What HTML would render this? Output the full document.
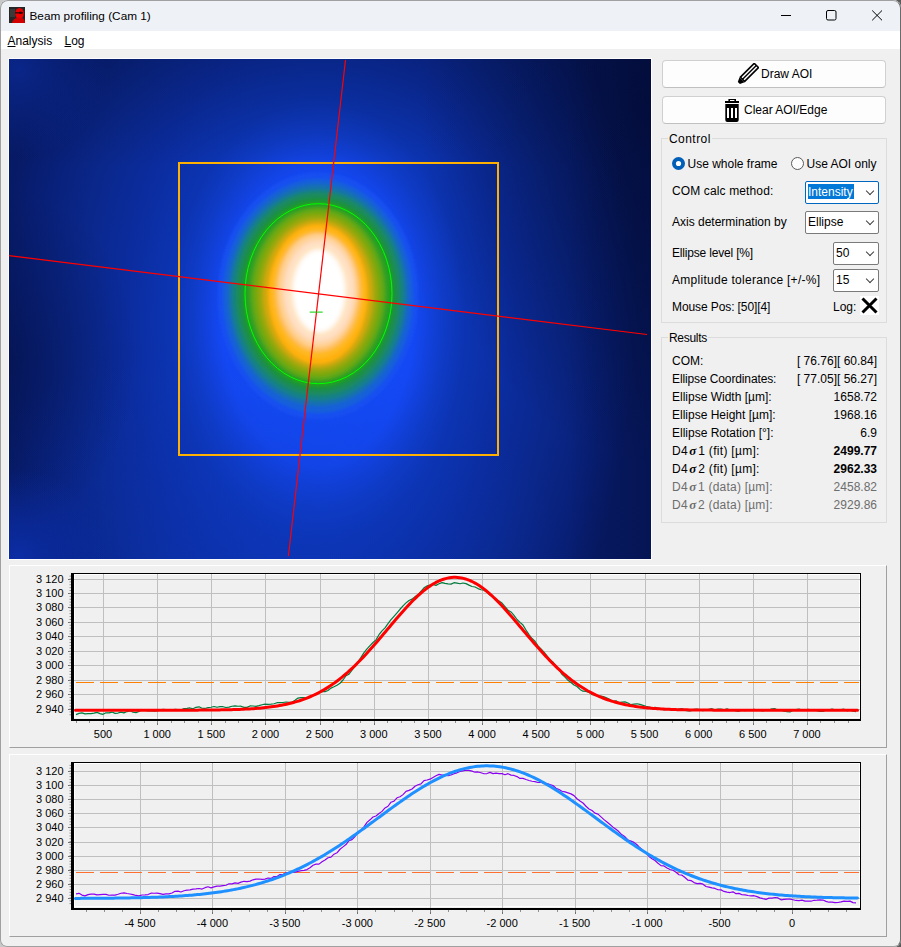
<!DOCTYPE html>
<html><head><meta charset="utf-8">
<style>
html,body{margin:0;padding:0;}
body{width:901px;height:947px;position:relative;overflow:hidden;background:linear-gradient(90deg,#c8c8c8 0,#c8c8c8 85%,#5a5a5a 93%);font-family:"Liberation Sans",sans-serif;color:#000;}
.win{position:absolute;left:0;top:0;width:901px;height:947px;background:#f0f0f0;border-radius:8px 8px 7px 7px;overflow:hidden;}
.wborder{position:absolute;left:0;top:0;width:901px;height:947px;border:1px solid #a0a0a0;border-right-color:#6a6a6a;border-radius:8px 8px 7px 7px;box-sizing:border-box;}
.abs{position:absolute;}
.t{position:absolute;white-space:pre;font-size:12px;line-height:14px;}
.title{position:absolute;left:0;top:0;width:100%;height:31px;background:#eef2f7;}
.menu{position:absolute;left:0;top:31px;width:100%;height:18px;background:#fff;}
.btn{position:absolute;left:662px;width:224px;height:28px;background:#fdfdfd;border:1px solid #d0d0d0;border-bottom-color:#c0c0c0;border-radius:4px;box-sizing:border-box;}
.grp{position:absolute;border:1px solid #dcdcdc;box-sizing:border-box;}
.combo{position:absolute;background:#fff;border:1px solid #7a7a7a;border-radius:2px;box-sizing:border-box;}
.chev{position:absolute;width:5px;height:5px;border-right:1px solid #404040;border-bottom:1px solid #404040;transform:rotate(45deg);}
.panel{position:absolute;left:9px;width:878px;height:183px;border-top:1px solid #fff;border-left:1px solid #fff;border-right:1px solid #a0a0a0;border-bottom:1px solid #a0a0a0;box-sizing:border-box;}
.ax{font-family:"Liberation Sans",sans-serif;font-size:11px;fill:#000;}
.sig{font-family:"Liberation Serif",serif;font-style:italic;font-weight:bold;font-size:13px;margin:0 1.6px 0 1.4px;}
</style></head><body>
<div class="win">
  <div class="title">
    <svg class="abs" style="left:9px;top:7px" width="16" height="16" viewBox="0 0 16 16">
      <rect width="16" height="16" fill="#262626"/>
      <rect x="1" y="2" width="5" height="8" fill="#3a3a3a"/>
      <ellipse cx="10.5" cy="6.5" rx="4.3" ry="5.6" fill="#ee0000"/>
      <path d="M3 16 Q4 11.5 8 11 L13 11 Q16 12 16 16 Z" fill="#d40000"/>
      <rect x="6" y="5" width="8" height="1.6" fill="#5a0000"/>
      <circle cx="11.5" cy="5.8" r="1.3" fill="#200000"/>
    </svg>
    <div class="t" style="left:29.5px;top:8.8px;font-size:11.8px;">Beam profiling (Cam 1)</div>
    <svg class="abs" style="left:780px;top:8px" width="110" height="16">
      <line x1="1" y1="7.5" x2="11" y2="7.5" stroke="#000" stroke-width="1"/>
      <rect x="46.5" y="2.5" width="9.5" height="9.5" rx="1.5" fill="none" stroke="#000" stroke-width="1"/>
      <path d="M92.2 2.5 L102 12.3 M102 2.5 L92.2 12.3" stroke="#000" stroke-width="1"/>
    </svg>
  </div>
  <div class="menu">
    <div class="t" style="left:7.5px;top:3.3px;"><u>A</u>nalysis</div>
    <div class="t" style="left:64.5px;top:3.3px;"><u>L</u>og</div>
  </div>

  <!-- beam image: svg origin at (8,58) -->
  <svg class="abs" style="left:8px;top:58px" width="644" height="502">
    <defs>
      <filter id="bl2" x="-20%" y="-20%" width="140%" height="140%"><feGaussianBlur stdDeviation="1.6"/></filter>
      <radialGradient id="halo" gradientUnits="userSpaceOnUse" cx="310" cy="262" r="320" gradientTransform="translate(310 262) scale(1 1.5) translate(-310 -262)">
        <stop offset="0" stop-color="#1450ff"/>
        <stop offset="0.30" stop-color="#1448f4"/>
        <stop offset="0.34" stop-color="#1242e0"/>
        <stop offset="0.39" stop-color="#0f3cc8"/>
        <stop offset="0.46" stop-color="#0c34b2"/>
        <stop offset="0.60" stop-color="#0b2c9e"/>
        <stop offset="0.75" stop-color="#0a278a"/>
        <stop offset="0.90" stop-color="#081f76"/>
        <stop offset="1" stop-color="#071a66"/>
      </radialGradient>
      <radialGradient id="bglow" gradientUnits="userSpaceOnUse" cx="230" cy="540" r="260" gradientTransform="translate(230 540) scale(1.3 1) translate(-230 -540)">
        <stop offset="0" stop-color="#0d38c0" stop-opacity="0.55"/>
        <stop offset="1" stop-color="#0d38c0" stop-opacity="0"/>
      </radialGradient>
      <linearGradient id="topdark" gradientUnits="userSpaceOnUse" x1="0" y1="0" x2="0" y2="110">
        <stop offset="0" stop-color="#020a30" stop-opacity="0.25"/>
        <stop offset="1" stop-color="#020a30" stop-opacity="0"/>
      </linearGradient>
      <radialGradient id="tr" gradientUnits="userSpaceOnUse" cx="643" cy="60" r="230" gradientTransform="translate(643 60) scale(1 1.5) translate(-643 -60)">
        <stop offset="0" stop-color="#020a30" stop-opacity="0.6"/>
        <stop offset="1" stop-color="#020a30" stop-opacity="0"/>
      </radialGradient>
      <linearGradient id="redge" gradientUnits="userSpaceOnUse" x1="560" y1="0" x2="643" y2="0">
        <stop offset="0" stop-color="#020a30" stop-opacity="0"/>
        <stop offset="1" stop-color="#020a30" stop-opacity="0.35"/>
      </linearGradient>
      <radialGradient id="lm" gradientUnits="userSpaceOnUse" cx="1" cy="300" r="130" gradientTransform="translate(1 300) scale(1 1.3) translate(-1 -300)">
        <stop offset="0" stop-color="#020a30" stop-opacity="0.35"/>
        <stop offset="1" stop-color="#020a30" stop-opacity="0"/>
      </radialGradient>
      <radialGradient id="blc" gradientUnits="userSpaceOnUse" cx="10" cy="500" r="90">
        <stop offset="0" stop-color="#0c30b0" stop-opacity="0.8"/>
        <stop offset="1" stop-color="#0c30b0" stop-opacity="0"/>
      </radialGradient>
      <radialGradient id="tlc" gradientUnits="userSpaceOnUse" cx="10" cy="10" r="90">
        <stop offset="0" stop-color="#0c30a8" stop-opacity="0.6"/>
        <stop offset="1" stop-color="#0c30a8" stop-opacity="0"/>
      </radialGradient>
      <clipPath id="imgclip"><rect x="1" y="1" width="642" height="500"/></clipPath>
    </defs>
    <rect x="0" y="0" width="644" height="502" fill="#fcfcfc"/>
    <g clip-path="url(#imgclip)">
    <rect x="1" y="1" width="642" height="500" fill="url(#halo)"/>
    <rect x="1" y="1" width="642" height="500" fill="url(#bglow)"/>
        <rect x="1" y="1" width="642" height="500" fill="url(#topdark)"/>
    <rect x="1" y="1" width="642" height="500" fill="url(#tr)"/>
    <rect x="1" y="1" width="642" height="500" fill="url(#redge)"/>
    <rect x="1" y="1" width="642" height="500" fill="url(#lm)"/>
    <rect x="1" y="1" width="642" height="500" fill="url(#blc)"/>
    <rect x="1" y="1" width="642" height="500" fill="url(#tlc)"/>
<g filter="url(#bl2)">
<ellipse cx="310" cy="238" rx="100" ry="123" fill="#1450f0"/>
<ellipse cx="310" cy="238" rx="95" ry="117" fill="#1460d8"/>
<ellipse cx="310" cy="237" rx="90" ry="111" fill="#1870b0"/>
<ellipse cx="310" cy="237" rx="87" ry="106" fill="#188088"/>
<ellipse cx="310" cy="236" rx="83" ry="102" fill="#1a8a60"/>
<ellipse cx="310" cy="236" rx="79" ry="97" fill="#1a9040"/>
<ellipse cx="310" cy="236" rx="75" ry="93" fill="#20a020"/>
<ellipse cx="310" cy="236" rx="71" ry="89" fill="#30a020"/>
<ellipse cx="310" cy="236" rx="67" ry="86" fill="#60a818"/>
<ellipse cx="310" cy="236" rx="63" ry="82" fill="#80a810"/>
<ellipse cx="310" cy="236" rx="59" ry="78" fill="#a0a810"/>
<ellipse cx="310" cy="236" rx="55" ry="74" fill="#d0a810"/>
<ellipse cx="310" cy="236" rx="50" ry="70" fill="#ffb010"/>
<ellipse cx="310" cy="235" rx="47" ry="65" fill="#ffb820"/>
<ellipse cx="310" cy="234" rx="43" ry="60" fill="#ffc060"/>
<ellipse cx="310" cy="233" rx="40" ry="57" fill="#ffd090"/>
<ellipse cx="311" cy="233" rx="37" ry="53" fill="#ffd8b0"/>
<ellipse cx="311" cy="233" rx="34" ry="49" fill="#ffe0c8"/>
<ellipse cx="311" cy="233" rx="31" ry="46" fill="#ffe4c0"/>
<ellipse cx="311" cy="233" rx="28" ry="43" fill="#fff0e0"/>
<ellipse cx="311" cy="233" rx="26" ry="41" fill="#fff8f0"/>
<ellipse cx="311" cy="233" rx="24" ry="39" fill="#ffffff"/>
</g>
    </g>
    <!-- AOI -->
    <rect x="171" y="105" width="319" height="292" fill="none" stroke="#ffb000" stroke-width="2"/>
    <!-- ellipse -->
    <ellipse cx="310.5" cy="235.7" rx="73.5" ry="90" fill="none" stroke="#00ff00" stroke-width="1"/>
    <!-- cross -->
    <line x1="337.5" y1="2" x2="280.4" y2="498" stroke="#ff0000" stroke-width="1.2"/>
    <line x1="1" y1="197.6" x2="639" y2="276.5" stroke="#ff0000" stroke-width="1.2"/>
    <line x1="301.7" y1="254.1" x2="314.7" y2="254.1" stroke="#00d000" stroke-width="1"/>
  </svg>

  <!-- right panel -->
  <div class="btn" style="top:60px;">
    <svg class="abs" style="left:74px;top:2px" width="22" height="22" viewBox="0 0 22 22">
      <g transform="translate(1.5 20.3) rotate(-45)">
        <rect x="5" y="-3.8" width="21" height="7.6" fill="#000"/>
        <rect x="6.5" y="-2.2" width="18" height="1.5" fill="#fff"/>
        <rect x="6.5" y="0.7" width="18" height="1.5" fill="#fff"/>
        <path d="M0.5 -1.5 L5 -3.6 L5 3.6 L0.5 1.5 Z" fill="#000"/>
      </g>
    </svg>
    <div class="t" style="left:98px;top:6px;">Draw AOI</div>
  </div>
  <div class="btn" style="top:96px;">
    <svg class="abs" style="left:62px;top:2px" width="15" height="24" viewBox="0 0 15 24">
      <rect x="3.4" y="0" width="7.6" height="3" fill="#000"/>
      <rect x="5" y="1" width="4.4" height="1.1" fill="#fff"/>
      <rect x="0" y="2" width="14" height="2" fill="#000"/>
      <path d="M0.3 5 L13.7 5 L13.7 21 Q13.7 23 11.7 23 L2.3 23 Q0.3 23 0.3 21 Z" fill="#000"/>
      <rect x="2" y="9" width="2" height="10" fill="#fff"/>
      <rect x="6" y="9" width="2" height="10" fill="#fff"/>
      <rect x="10" y="9" width="2" height="10" fill="#fff"/>
    </svg>
    <div class="t" style="left:81px;top:6px;">Clear AOI/Edge</div>
  </div>

  <!-- Control group -->
  <div class="grp" style="left:661px;top:138px;width:226px;height:185px;"></div>
  <div class="t" style="left:668px;top:132px;background:#f0f0f0;padding:0 1px;letter-spacing:0.45px;">Control</div>
  <svg class="abs" style="left:672px;top:157px" width="13" height="13">
    <circle cx="6.5" cy="6.5" r="6.5" fill="#005fb8"/>
    <circle cx="6.5" cy="6.5" r="2.6" fill="#fff"/>
  </svg>
  <div class="t" style="left:687.5px;top:156.7px;">Use whole frame</div>
  <svg class="abs" style="left:791px;top:157px" width="13" height="13">
    <circle cx="6.5" cy="6.5" r="6" fill="#fdfdfd" stroke="#5a5a5a" stroke-width="1"/>
  </svg>
  <div class="t" style="left:806.5px;top:156.7px;">Use AOI only</div>

  <div class="t" style="left:672px;top:184px;letter-spacing:0.13px;">COM calc method:</div>
  <div class="combo" style="left:805px;top:181px;width:74px;height:23px;border-color:#0067c0;">
    <div class="abs" style="left:2px;top:2px;width:46px;height:15px;background:#0078d7;"></div>
    <div class="t" style="left:2px;top:3px;color:#fff;">Intensity</div>
    <div class="chev" style="left:61px;top:6px;"></div>
  </div>
  <div class="t" style="left:672px;top:214.7px;">Axis determination by</div>
  <div class="combo" style="left:805px;top:211px;width:74px;height:23px;">
    <div class="t" style="left:2px;top:3px;">Ellipse</div>
    <div class="chev" style="left:61px;top:6px;"></div>
  </div>
  <div class="t" style="left:672px;top:245.7px;letter-spacing:-0.18px;">Ellipse level [%]</div>
  <div class="combo" style="left:833px;top:242px;width:46px;height:23px;">
    <div class="t" style="left:2px;top:3px;">50</div>
    <div class="chev" style="left:33px;top:6px;"></div>
  </div>
  <div class="t" style="left:672px;top:272.5px;letter-spacing:0.28px;">Amplitude tolerance [+/-%]</div>
  <div class="combo" style="left:833px;top:269px;width:46px;height:23px;">
    <div class="t" style="left:2px;top:3px;">15</div>
    <div class="chev" style="left:33px;top:6px;"></div>
  </div>
  <div class="t" style="left:672px;top:299.8px;letter-spacing:-0.1px;">Mouse Pos: [50][4]</div>
  <div class="t" style="left:833px;top:299.8px;">Log:</div>
  <svg class="abs" style="left:859.5px;top:296.3px" width="19" height="19">
    <rect width="19" height="19" fill="#fff"/>
    <path d="M2.5 2.5 L16.5 16.5 M16.5 2.5 L2.5 16.5" stroke="#000" stroke-width="3"/>
  </svg>

  <!-- Results group -->
  <div class="grp" style="left:661px;top:337px;width:226px;height:186px;"></div>
  <div class="t" style="left:668px;top:330.7px;background:#f0f0f0;padding:0 1px;letter-spacing:-0.3px;">Results</div>
  <div class="t" style="left:672px;top:354.2px;">COM:</div>
  <div class="t" style="left:672px;top:372.2px;letter-spacing:-0.12px;">Ellipse Coordinates:</div>
  <div class="t" style="left:672px;top:390.2px;">Ellipse Width [µm]:</div>
  <div class="t" style="left:672px;top:408.2px;">Ellipse Height [µm]:</div>
  <div class="t" style="left:672px;top:426.2px;">Ellipse Rotation [°]:</div>
  <div class="t" style="left:672px;top:444.2px;letter-spacing:0.3px;">D4<span class="sig">σ</span>1 (fit) [µm]:</div>
  <div class="t" style="left:672px;top:462.2px;letter-spacing:0.3px;">D4<span class="sig">σ</span>2 (fit) [µm]:</div>
  <div class="t" style="left:672px;top:480.2px;color:#6d6d6d;letter-spacing:0.22px;">D4<span class="sig">σ</span>1 (data) [µm]:</div>
  <div class="t" style="left:672px;top:498.2px;color:#6d6d6d;letter-spacing:0.22px;">D4<span class="sig">σ</span>2 (data) [µm]:</div>
  <div class="t" style="right:24px;top:354.2px;">[ 76.76][ 60.84]</div>
  <div class="t" style="right:24px;top:372.2px;">[ 77.05][ 56.27]</div>
  <div class="t" style="right:24px;top:390.2px;">1658.72</div>
  <div class="t" style="right:24px;top:408.2px;">1968.16</div>
  <div class="t" style="right:24px;top:426.2px;">6.9</div>
  <div class="t" style="right:24px;top:444.2px;font-weight:bold;">2499.77</div>
  <div class="t" style="right:24px;top:462.2px;font-weight:bold;">2962.33</div>
  <div class="t" style="right:24px;top:480.2px;color:#6d6d6d;">2458.82</div>
  <div class="t" style="right:24px;top:498.2px;color:#6d6d6d;">2929.86</div>

  <!-- chart panels -->
  <div class="panel" style="top:565px;"></div>
  <div class="panel" style="top:754px;"></div>
</div>
<svg class="abs" style="left:0;top:0" width="901" height="947">
<rect x="74.5" y="574.5" width="785" height="143" fill="none" stroke="#ffffff" stroke-width="1"/>
<line x1="103.5" y1="574" x2="103.5" y2="719" stroke="#bfbfbf" stroke-width="1"/>
<line x1="103.5" y1="721" x2="103.5" y2="725" stroke="#707070" stroke-width="1"/>
<line x1="157.5" y1="574" x2="157.5" y2="719" stroke="#bfbfbf" stroke-width="1"/>
<line x1="157.5" y1="721" x2="157.5" y2="725" stroke="#707070" stroke-width="1"/>
<line x1="211.5" y1="574" x2="211.5" y2="719" stroke="#bfbfbf" stroke-width="1"/>
<line x1="211.5" y1="721" x2="211.5" y2="725" stroke="#707070" stroke-width="1"/>
<line x1="265.5" y1="574" x2="265.5" y2="719" stroke="#bfbfbf" stroke-width="1"/>
<line x1="265.5" y1="721" x2="265.5" y2="725" stroke="#707070" stroke-width="1"/>
<line x1="320.5" y1="574" x2="320.5" y2="719" stroke="#bfbfbf" stroke-width="1"/>
<line x1="320.5" y1="721" x2="320.5" y2="725" stroke="#707070" stroke-width="1"/>
<line x1="374.5" y1="574" x2="374.5" y2="719" stroke="#bfbfbf" stroke-width="1"/>
<line x1="374.5" y1="721" x2="374.5" y2="725" stroke="#707070" stroke-width="1"/>
<line x1="428.5" y1="574" x2="428.5" y2="719" stroke="#bfbfbf" stroke-width="1"/>
<line x1="428.5" y1="721" x2="428.5" y2="725" stroke="#707070" stroke-width="1"/>
<line x1="482.5" y1="574" x2="482.5" y2="719" stroke="#bfbfbf" stroke-width="1"/>
<line x1="482.5" y1="721" x2="482.5" y2="725" stroke="#707070" stroke-width="1"/>
<line x1="536.5" y1="574" x2="536.5" y2="719" stroke="#bfbfbf" stroke-width="1"/>
<line x1="536.5" y1="721" x2="536.5" y2="725" stroke="#707070" stroke-width="1"/>
<line x1="590.5" y1="574" x2="590.5" y2="719" stroke="#bfbfbf" stroke-width="1"/>
<line x1="590.5" y1="721" x2="590.5" y2="725" stroke="#707070" stroke-width="1"/>
<line x1="645.5" y1="574" x2="645.5" y2="719" stroke="#bfbfbf" stroke-width="1"/>
<line x1="645.5" y1="721" x2="645.5" y2="725" stroke="#707070" stroke-width="1"/>
<line x1="699.5" y1="574" x2="699.5" y2="719" stroke="#bfbfbf" stroke-width="1"/>
<line x1="699.5" y1="721" x2="699.5" y2="725" stroke="#707070" stroke-width="1"/>
<line x1="753.5" y1="574" x2="753.5" y2="719" stroke="#bfbfbf" stroke-width="1"/>
<line x1="753.5" y1="721" x2="753.5" y2="725" stroke="#707070" stroke-width="1"/>
<line x1="807.5" y1="574" x2="807.5" y2="719" stroke="#bfbfbf" stroke-width="1"/>
<line x1="807.5" y1="721" x2="807.5" y2="725" stroke="#707070" stroke-width="1"/>
<line x1="74" y1="709.5" x2="860" y2="709.5" stroke="#bfbfbf" stroke-width="1"/>
<line x1="68" y1="709.5" x2="71" y2="709.5" stroke="#707070" stroke-width="1"/>
<text x="63.5" y="712.6" text-anchor="end" class="ax">2 940</text>
<line x1="74" y1="694.5" x2="860" y2="694.5" stroke="#bfbfbf" stroke-width="1"/>
<line x1="68" y1="694.5" x2="71" y2="694.5" stroke="#707070" stroke-width="1"/>
<text x="63.5" y="697.6" text-anchor="end" class="ax">2 960</text>
<line x1="74" y1="680.5" x2="860" y2="680.5" stroke="#bfbfbf" stroke-width="1"/>
<line x1="68" y1="680.5" x2="71" y2="680.5" stroke="#707070" stroke-width="1"/>
<text x="63.5" y="683.6" text-anchor="end" class="ax">2 980</text>
<line x1="74" y1="665.5" x2="860" y2="665.5" stroke="#bfbfbf" stroke-width="1"/>
<line x1="68" y1="665.5" x2="71" y2="665.5" stroke="#707070" stroke-width="1"/>
<text x="63.5" y="668.6" text-anchor="end" class="ax">3 000</text>
<line x1="74" y1="651.5" x2="860" y2="651.5" stroke="#bfbfbf" stroke-width="1"/>
<line x1="68" y1="651.5" x2="71" y2="651.5" stroke="#707070" stroke-width="1"/>
<text x="63.5" y="654.6" text-anchor="end" class="ax">3 020</text>
<line x1="74" y1="636.5" x2="860" y2="636.5" stroke="#bfbfbf" stroke-width="1"/>
<line x1="68" y1="636.5" x2="71" y2="636.5" stroke="#707070" stroke-width="1"/>
<text x="63.5" y="639.6" text-anchor="end" class="ax">3 040</text>
<line x1="74" y1="622.5" x2="860" y2="622.5" stroke="#bfbfbf" stroke-width="1"/>
<line x1="68" y1="622.5" x2="71" y2="622.5" stroke="#707070" stroke-width="1"/>
<text x="63.5" y="625.6" text-anchor="end" class="ax">3 060</text>
<line x1="74" y1="607.5" x2="860" y2="607.5" stroke="#bfbfbf" stroke-width="1"/>
<line x1="68" y1="607.5" x2="71" y2="607.5" stroke="#707070" stroke-width="1"/>
<text x="63.5" y="610.6" text-anchor="end" class="ax">3 080</text>
<line x1="74" y1="593.5" x2="860" y2="593.5" stroke="#bfbfbf" stroke-width="1"/>
<line x1="68" y1="593.5" x2="71" y2="593.5" stroke="#707070" stroke-width="1"/>
<text x="63.5" y="596.6" text-anchor="end" class="ax">3 100</text>
<line x1="74" y1="579.5" x2="860" y2="579.5" stroke="#bfbfbf" stroke-width="1"/>
<line x1="68" y1="579.5" x2="71" y2="579.5" stroke="#707070" stroke-width="1"/>
<text x="63.5" y="582.6" text-anchor="end" class="ax">3 120</text>
<line x1="69.5" y1="714.78" x2="71" y2="714.78" stroke="#909090" stroke-width="1"/>
<line x1="69.5" y1="711.89" x2="71" y2="711.89" stroke="#909090" stroke-width="1"/>
<line x1="69.5" y1="709" x2="71" y2="709" stroke="#909090" stroke-width="1"/>
<line x1="69.5" y1="706.11" x2="71" y2="706.11" stroke="#909090" stroke-width="1"/>
<line x1="69.5" y1="703.22" x2="71" y2="703.22" stroke="#909090" stroke-width="1"/>
<line x1="69.5" y1="700.33" x2="71" y2="700.33" stroke="#909090" stroke-width="1"/>
<line x1="69.5" y1="697.44" x2="71" y2="697.44" stroke="#909090" stroke-width="1"/>
<line x1="69.5" y1="694.56" x2="71" y2="694.56" stroke="#909090" stroke-width="1"/>
<line x1="69.5" y1="691.67" x2="71" y2="691.67" stroke="#909090" stroke-width="1"/>
<line x1="69.5" y1="688.78" x2="71" y2="688.78" stroke="#909090" stroke-width="1"/>
<line x1="69.5" y1="685.89" x2="71" y2="685.89" stroke="#909090" stroke-width="1"/>
<line x1="69.5" y1="683" x2="71" y2="683" stroke="#909090" stroke-width="1"/>
<line x1="69.5" y1="680.11" x2="71" y2="680.11" stroke="#909090" stroke-width="1"/>
<line x1="69.5" y1="677.22" x2="71" y2="677.22" stroke="#909090" stroke-width="1"/>
<line x1="69.5" y1="674.33" x2="71" y2="674.33" stroke="#909090" stroke-width="1"/>
<line x1="69.5" y1="671.44" x2="71" y2="671.44" stroke="#909090" stroke-width="1"/>
<line x1="69.5" y1="668.56" x2="71" y2="668.56" stroke="#909090" stroke-width="1"/>
<line x1="69.5" y1="665.67" x2="71" y2="665.67" stroke="#909090" stroke-width="1"/>
<line x1="69.5" y1="662.78" x2="71" y2="662.78" stroke="#909090" stroke-width="1"/>
<line x1="69.5" y1="659.89" x2="71" y2="659.89" stroke="#909090" stroke-width="1"/>
<line x1="69.5" y1="657" x2="71" y2="657" stroke="#909090" stroke-width="1"/>
<line x1="69.5" y1="654.11" x2="71" y2="654.11" stroke="#909090" stroke-width="1"/>
<line x1="69.5" y1="651.22" x2="71" y2="651.22" stroke="#909090" stroke-width="1"/>
<line x1="69.5" y1="648.33" x2="71" y2="648.33" stroke="#909090" stroke-width="1"/>
<line x1="69.5" y1="645.44" x2="71" y2="645.44" stroke="#909090" stroke-width="1"/>
<line x1="69.5" y1="642.56" x2="71" y2="642.56" stroke="#909090" stroke-width="1"/>
<line x1="69.5" y1="639.67" x2="71" y2="639.67" stroke="#909090" stroke-width="1"/>
<line x1="69.5" y1="636.78" x2="71" y2="636.78" stroke="#909090" stroke-width="1"/>
<line x1="69.5" y1="633.89" x2="71" y2="633.89" stroke="#909090" stroke-width="1"/>
<line x1="69.5" y1="631" x2="71" y2="631" stroke="#909090" stroke-width="1"/>
<line x1="69.5" y1="628.11" x2="71" y2="628.11" stroke="#909090" stroke-width="1"/>
<line x1="69.5" y1="625.22" x2="71" y2="625.22" stroke="#909090" stroke-width="1"/>
<line x1="69.5" y1="622.33" x2="71" y2="622.33" stroke="#909090" stroke-width="1"/>
<line x1="69.5" y1="619.44" x2="71" y2="619.44" stroke="#909090" stroke-width="1"/>
<line x1="69.5" y1="616.56" x2="71" y2="616.56" stroke="#909090" stroke-width="1"/>
<line x1="69.5" y1="613.67" x2="71" y2="613.67" stroke="#909090" stroke-width="1"/>
<line x1="69.5" y1="610.78" x2="71" y2="610.78" stroke="#909090" stroke-width="1"/>
<line x1="69.5" y1="607.89" x2="71" y2="607.89" stroke="#909090" stroke-width="1"/>
<line x1="69.5" y1="605" x2="71" y2="605" stroke="#909090" stroke-width="1"/>
<line x1="69.5" y1="602.11" x2="71" y2="602.11" stroke="#909090" stroke-width="1"/>
<line x1="69.5" y1="599.22" x2="71" y2="599.22" stroke="#909090" stroke-width="1"/>
<line x1="69.5" y1="596.33" x2="71" y2="596.33" stroke="#909090" stroke-width="1"/>
<line x1="69.5" y1="593.44" x2="71" y2="593.44" stroke="#909090" stroke-width="1"/>
<line x1="69.5" y1="590.56" x2="71" y2="590.56" stroke="#909090" stroke-width="1"/>
<line x1="69.5" y1="587.67" x2="71" y2="587.67" stroke="#909090" stroke-width="1"/>
<line x1="69.5" y1="584.78" x2="71" y2="584.78" stroke="#909090" stroke-width="1"/>
<line x1="69.5" y1="581.89" x2="71" y2="581.89" stroke="#909090" stroke-width="1"/>
<line x1="69.5" y1="579" x2="71" y2="579" stroke="#909090" stroke-width="1"/>
<line x1="69.5" y1="576.11" x2="71" y2="576.11" stroke="#909090" stroke-width="1"/>
<line x1="76.5" y1="721" x2="76.5" y2="723" stroke="#909090" stroke-width="1"/>
<line x1="89.5" y1="721" x2="89.5" y2="723" stroke="#909090" stroke-width="1"/>
<line x1="103.5" y1="721" x2="103.5" y2="723" stroke="#909090" stroke-width="1"/>
<line x1="117.5" y1="721" x2="117.5" y2="723" stroke="#909090" stroke-width="1"/>
<line x1="130.5" y1="721" x2="130.5" y2="723" stroke="#909090" stroke-width="1"/>
<line x1="144.5" y1="721" x2="144.5" y2="723" stroke="#909090" stroke-width="1"/>
<line x1="157.5" y1="721" x2="157.5" y2="723" stroke="#909090" stroke-width="1"/>
<line x1="171.5" y1="721" x2="171.5" y2="723" stroke="#909090" stroke-width="1"/>
<line x1="184.5" y1="721" x2="184.5" y2="723" stroke="#909090" stroke-width="1"/>
<line x1="198.5" y1="721" x2="198.5" y2="723" stroke="#909090" stroke-width="1"/>
<line x1="211.5" y1="721" x2="211.5" y2="723" stroke="#909090" stroke-width="1"/>
<line x1="225.5" y1="721" x2="225.5" y2="723" stroke="#909090" stroke-width="1"/>
<line x1="238.5" y1="721" x2="238.5" y2="723" stroke="#909090" stroke-width="1"/>
<line x1="252.5" y1="721" x2="252.5" y2="723" stroke="#909090" stroke-width="1"/>
<line x1="265.5" y1="721" x2="265.5" y2="723" stroke="#909090" stroke-width="1"/>
<line x1="279.5" y1="721" x2="279.5" y2="723" stroke="#909090" stroke-width="1"/>
<line x1="293.5" y1="721" x2="293.5" y2="723" stroke="#909090" stroke-width="1"/>
<line x1="306.5" y1="721" x2="306.5" y2="723" stroke="#909090" stroke-width="1"/>
<line x1="320.5" y1="721" x2="320.5" y2="723" stroke="#909090" stroke-width="1"/>
<line x1="333.5" y1="721" x2="333.5" y2="723" stroke="#909090" stroke-width="1"/>
<line x1="347.5" y1="721" x2="347.5" y2="723" stroke="#909090" stroke-width="1"/>
<line x1="360.5" y1="721" x2="360.5" y2="723" stroke="#909090" stroke-width="1"/>
<line x1="374.5" y1="721" x2="374.5" y2="723" stroke="#909090" stroke-width="1"/>
<line x1="387.5" y1="721" x2="387.5" y2="723" stroke="#909090" stroke-width="1"/>
<line x1="401.5" y1="721" x2="401.5" y2="723" stroke="#909090" stroke-width="1"/>
<line x1="414.5" y1="721" x2="414.5" y2="723" stroke="#909090" stroke-width="1"/>
<line x1="428.5" y1="721" x2="428.5" y2="723" stroke="#909090" stroke-width="1"/>
<line x1="441.5" y1="721" x2="441.5" y2="723" stroke="#909090" stroke-width="1"/>
<line x1="455.5" y1="721" x2="455.5" y2="723" stroke="#909090" stroke-width="1"/>
<line x1="469.5" y1="721" x2="469.5" y2="723" stroke="#909090" stroke-width="1"/>
<line x1="482.5" y1="721" x2="482.5" y2="723" stroke="#909090" stroke-width="1"/>
<line x1="496.5" y1="721" x2="496.5" y2="723" stroke="#909090" stroke-width="1"/>
<line x1="509.5" y1="721" x2="509.5" y2="723" stroke="#909090" stroke-width="1"/>
<line x1="523.5" y1="721" x2="523.5" y2="723" stroke="#909090" stroke-width="1"/>
<line x1="536.5" y1="721" x2="536.5" y2="723" stroke="#909090" stroke-width="1"/>
<line x1="550.5" y1="721" x2="550.5" y2="723" stroke="#909090" stroke-width="1"/>
<line x1="563.5" y1="721" x2="563.5" y2="723" stroke="#909090" stroke-width="1"/>
<line x1="577.5" y1="721" x2="577.5" y2="723" stroke="#909090" stroke-width="1"/>
<line x1="590.5" y1="721" x2="590.5" y2="723" stroke="#909090" stroke-width="1"/>
<line x1="604.5" y1="721" x2="604.5" y2="723" stroke="#909090" stroke-width="1"/>
<line x1="617.5" y1="721" x2="617.5" y2="723" stroke="#909090" stroke-width="1"/>
<line x1="631.5" y1="721" x2="631.5" y2="723" stroke="#909090" stroke-width="1"/>
<line x1="645.5" y1="721" x2="645.5" y2="723" stroke="#909090" stroke-width="1"/>
<line x1="658.5" y1="721" x2="658.5" y2="723" stroke="#909090" stroke-width="1"/>
<line x1="672.5" y1="721" x2="672.5" y2="723" stroke="#909090" stroke-width="1"/>
<line x1="685.5" y1="721" x2="685.5" y2="723" stroke="#909090" stroke-width="1"/>
<line x1="699.5" y1="721" x2="699.5" y2="723" stroke="#909090" stroke-width="1"/>
<line x1="712.5" y1="721" x2="712.5" y2="723" stroke="#909090" stroke-width="1"/>
<line x1="726.5" y1="721" x2="726.5" y2="723" stroke="#909090" stroke-width="1"/>
<line x1="739.5" y1="721" x2="739.5" y2="723" stroke="#909090" stroke-width="1"/>
<line x1="753.5" y1="721" x2="753.5" y2="723" stroke="#909090" stroke-width="1"/>
<line x1="766.5" y1="721" x2="766.5" y2="723" stroke="#909090" stroke-width="1"/>
<line x1="780.5" y1="721" x2="780.5" y2="723" stroke="#909090" stroke-width="1"/>
<line x1="793.5" y1="721" x2="793.5" y2="723" stroke="#909090" stroke-width="1"/>
<line x1="807.5" y1="721" x2="807.5" y2="723" stroke="#909090" stroke-width="1"/>
<line x1="820.5" y1="721" x2="820.5" y2="723" stroke="#909090" stroke-width="1"/>
<line x1="834.5" y1="721" x2="834.5" y2="723" stroke="#909090" stroke-width="1"/>
<line x1="848.5" y1="721" x2="848.5" y2="723" stroke="#909090" stroke-width="1"/>
<text x="103" y="737.5" text-anchor="middle" class="ax">500</text>
<text x="157.15" y="737.5" text-anchor="middle" class="ax">1 000</text>
<text x="211.3" y="737.5" text-anchor="middle" class="ax">1 500</text>
<text x="265.45" y="737.5" text-anchor="middle" class="ax">2 000</text>
<text x="319.6" y="737.5" text-anchor="middle" class="ax">2 500</text>
<text x="373.75" y="737.5" text-anchor="middle" class="ax">3 000</text>
<text x="427.9" y="737.5" text-anchor="middle" class="ax">3 500</text>
<text x="482.05" y="737.5" text-anchor="middle" class="ax">4 000</text>
<text x="536.2" y="737.5" text-anchor="middle" class="ax">4 500</text>
<text x="590.35" y="737.5" text-anchor="middle" class="ax">5 000</text>
<text x="644.5" y="737.5" text-anchor="middle" class="ax">5 500</text>
<text x="698.65" y="737.5" text-anchor="middle" class="ax">6 000</text>
<text x="752.8" y="737.5" text-anchor="middle" class="ax">6 500</text>
<text x="806.95" y="737.5" text-anchor="middle" class="ax">7 000</text>
<line x1="76" y1="682.5" x2="859" y2="682.5" stroke="#ff8000" stroke-width="1.2" stroke-dasharray="18 6"/>
<polyline points="76,714.67 79,713.41 82,712.94 85,713.82 88,713.66 91,713.62 94,713.07 97,712.41 100,713.63 103,714.32 106,712.75 109,712.84 112,712.07 115,713.41 118,713.03 121,712.18 124,712.9 127,711.57 130,710.8 133,712.17 136,712.61 139,711.42 142,709.76 145,710.17 148,710.81 151,710.56 154,711.18 157,710.87 160,710.06 163,709.4 166,709.64 169,709.79 172,709.91 175,709.38 178,709.48 181,710.11 184,708.5 187,708.3 190,707.96 193,708.8 196,707.31 199,706.83 202,708.27 205,708.47 208,707.64 211,707.24 214,706.5 217,707.28 220,706.69 223,706.71 226,707.5 229,707.18 232,706.26 235,705.8 238,706.27 241,706.22 244,707.37 247,707.35 250,705.94 253,705.99 256,706.44 259,705.64 262,704.73 265,704.18 268,704.42 271,704.21 274,703.77 277,702.71 280,702.55 283,702.51 286,701.98 289,702.44 292,702.26 295,700.22 298,698.07 301,697.55 304,697.68 307,698.13 310,697.29 313,695.17 316,693.72 319,692.99 322,691.43 325,691.61 328,690.45 331,688.09 334,686.8 337,685.16 340,683.25 343,680 346,675.76 349,674.25 352,670.25 355,666.45 358,661.89 361,657.38 364,652.61 367,648.96 370,645.63 373,642.52 376,639.9 379,634.73 382,630.86 385,627.81 388,623.64 391,619.73 394,616.27 397,612.89 400,609.26 403,605.86 406,602.89 409,600.52 412,599.13 415,596.79 418,594.55 421,591.27 424,587.81 427,585.91 430,585 433,584.52 436,585.35 439,583.73 442,582.64 445,583.34 448,583.84 451,584.16 454,582.69 457,583.15 460,583.76 463,583.03 466,583.65 469,585.15 472,586.52 475,587 478,588.57 481,589.76 484,590.24 487,592.32 490,595.03 493,596.8 496,599.51 499,601.04 502,603.11 505,606.56 508,610.25 511,611.93 514,615.36 517,619.48 520,622.36 523,625.07 526,630.06 529,634.52 532,638.51 535,641.26 538,645.93 541,648.93 544,652.24 547,655.77 550,659.86 553,662.09 556,665.54 559,669.78 562,674.3 565,677.09 568,680.3 571,682.44 574,685.04 577,686.51 580,689.43 583,691.19 586,691.39 589,692.36 592,694.61 595,694.84 598,696.53 601,696.21 604,696.79 607,698.17 610,699.63 613,701.42 616,700.74 619,702.7 622,702.2 625,701.92 628,702.96 631,704.65 634,704.1 637,703.78 640,704.43 643,705.37 646,706.28 649,707 652,707.88 655,707.44 658,707.98 661,708.98 664,709.86 667,709.16 670,709.78 673,709.71 676,710.13 679,709.09 682,708.53 685,710.32 688,710.81 691,710.79 694,709.27 697,709 700,709.91 703,710.66 706,709.98 709,709.27 712,708.71 715,709.79 718,709.1 721,709.2 724,709.73 727,708.84 730,710.13 733,709.64 736,710.88 739,711.31 742,709.81 745,710.67 748,709.84 751,709.8 754,709.22 757,710.02 760,710.49 763,710.84 766,709.68 769,709.71 772,708.91 775,708.67 778,710.29 781,710.14 784,711.09 787,711.72 790,711.96 793,710.24 796,709.57 799,709.14 802,710.05 805,709.87 808,709.39 811,710.09 814,709.99 817,710.75 820,711.45 823,711.38 826,709.9 829,709.91 832,709.08 835,709.75 838,710.5 841,709.7 844,709.2 847,710.84 850,710.14 853,711.12 856,711.56" fill="none" stroke="#007a3d" stroke-width="1.2" stroke-linejoin="round"/>
<polyline points="75.5,710.22 77.5,710.22 79.5,710.22 81.5,710.22 83.5,710.22 85.5,710.22 87.5,710.22 89.5,710.22 91.5,710.22 93.5,710.22 95.5,710.22 97.5,710.22 99.5,710.22 101.5,710.22 103.5,710.22 105.5,710.22 107.5,710.22 109.5,710.22 111.5,710.22 113.5,710.22 115.5,710.22 117.5,710.22 119.5,710.22 121.5,710.22 123.5,710.22 125.5,710.22 127.5,710.22 129.5,710.22 131.5,710.22 133.5,710.22 135.5,710.22 137.5,710.22 139.5,710.22 141.5,710.22 143.5,710.22 145.5,710.22 147.5,710.22 149.5,710.22 151.5,710.22 153.5,710.22 155.5,710.21 157.5,710.21 159.5,710.21 161.5,710.21 163.5,710.21 165.5,710.21 167.5,710.21 169.5,710.2 171.5,710.2 173.5,710.2 175.5,710.2 177.5,710.19 179.5,710.19 181.5,710.18 183.5,710.18 185.5,710.17 187.5,710.17 189.5,710.16 191.5,710.15 193.5,710.15 195.5,710.14 197.5,710.13 199.5,710.11 201.5,710.1 203.5,710.09 205.5,710.07 207.5,710.06 209.5,710.04 211.5,710.02 213.5,709.99 215.5,709.97 217.5,709.94 219.5,709.91 221.5,709.87 223.5,709.84 225.5,709.8 227.5,709.75 229.5,709.7 231.5,709.65 233.5,709.59 235.5,709.53 237.5,709.46 239.5,709.38 241.5,709.3 243.5,709.21 245.5,709.11 247.5,709.01 249.5,708.89 251.5,708.77 253.5,708.64 255.5,708.49 257.5,708.33 259.5,708.17 261.5,707.98 263.5,707.79 265.5,707.58 267.5,707.35 269.5,707.11 271.5,706.84 273.5,706.56 275.5,706.26 277.5,705.94 279.5,705.6 281.5,705.23 283.5,704.84 285.5,704.43 287.5,703.99 289.5,703.52 291.5,703.02 293.5,702.49 295.5,701.93 297.5,701.33 299.5,700.71 301.5,700.04 303.5,699.34 305.5,698.6 307.5,697.83 309.5,697.01 311.5,696.15 313.5,695.25 315.5,694.3 317.5,693.31 319.5,692.27 321.5,691.18 323.5,690.05 325.5,688.87 327.5,687.64 329.5,686.36 331.5,685.02 333.5,683.64 335.5,682.21 337.5,680.72 339.5,679.18 341.5,677.59 343.5,675.95 345.5,674.26 347.5,672.51 349.5,670.72 351.5,668.88 353.5,666.99 355.5,665.05 357.5,663.06 359.5,661.04 361.5,658.97 363.5,656.86 365.5,654.71 367.5,652.52 369.5,650.3 371.5,648.06 373.5,645.78 375.5,643.47 377.5,641.15 379.5,638.81 381.5,636.45 383.5,634.08 385.5,631.7 387.5,629.32 389.5,626.94 391.5,624.56 393.5,622.2 395.5,619.84 397.5,617.51 399.5,615.19 401.5,612.91 403.5,610.66 405.5,608.44 407.5,606.27 409.5,604.14 411.5,602.06 413.5,600.04 415.5,598.07 417.5,596.18 419.5,594.35 421.5,592.59 423.5,590.92 425.5,589.32 427.5,587.81 429.5,586.39 431.5,585.06 433.5,583.83 435.5,582.7 437.5,581.67 439.5,580.74 441.5,579.92 443.5,579.22 445.5,578.62 447.5,578.13 449.5,577.76 451.5,577.5 453.5,577.36 455.5,577.34 457.5,577.43 459.5,577.64 461.5,577.96 463.5,578.39 465.5,578.94 467.5,579.6 469.5,580.38 471.5,581.25 473.5,582.24 475.5,583.33 477.5,584.52 479.5,585.8 481.5,587.18 483.5,588.66 485.5,590.22 487.5,591.86 489.5,593.58 491.5,595.38 493.5,597.24 495.5,599.18 497.5,601.18 499.5,603.23 501.5,605.34 503.5,607.49 505.5,609.69 507.5,611.93 509.5,614.2 511.5,616.5 513.5,618.83 515.5,621.17 517.5,623.53 519.5,625.91 521.5,628.29 523.5,630.67 525.5,633.05 527.5,635.42 529.5,637.78 531.5,640.14 533.5,642.47 535.5,644.78 537.5,647.07 539.5,649.33 541.5,651.57 543.5,653.77 545.5,655.93 547.5,658.06 549.5,660.15 551.5,662.19 553.5,664.19 555.5,666.15 557.5,668.06 559.5,669.93 561.5,671.74 563.5,673.51 565.5,675.22 567.5,676.88 569.5,678.5 571.5,680.06 573.5,681.57 575.5,683.02 577.5,684.43 579.5,685.78 581.5,687.09 583.5,688.34 585.5,689.54 587.5,690.7 589.5,691.8 591.5,692.86 593.5,693.87 595.5,694.84 597.5,695.76 599.5,696.64 601.5,697.48 603.5,698.27 605.5,699.03 607.5,699.74 609.5,700.42 611.5,701.07 613.5,701.68 615.5,702.25 617.5,702.79 619.5,703.31 621.5,703.79 623.5,704.24 625.5,704.67 627.5,705.07 629.5,705.44 631.5,705.8 633.5,706.13 635.5,706.44 637.5,706.72 639.5,706.99 641.5,707.25 643.5,707.48 645.5,707.7 647.5,707.9 649.5,708.09 651.5,708.26 653.5,708.42 655.5,708.57 657.5,708.71 659.5,708.84 661.5,708.96 663.5,709.07 665.5,709.17 667.5,709.26 669.5,709.35 671.5,709.43 673.5,709.5 675.5,709.56 677.5,709.63 679.5,709.68 681.5,709.73 683.5,709.78 685.5,709.82 687.5,709.86 689.5,709.89 691.5,709.93 693.5,709.96 695.5,709.98 697.5,710.01 699.5,710.03 701.5,710.05 703.5,710.07 705.5,710.08 707.5,710.1 709.5,710.11 711.5,710.12 713.5,710.13 715.5,710.14 717.5,710.15 719.5,710.16 721.5,710.17 723.5,710.17 725.5,710.18 727.5,710.18 729.5,710.19 731.5,710.19 733.5,710.19 735.5,710.2 737.5,710.2 739.5,710.2 741.5,710.21 743.5,710.21 745.5,710.21 747.5,710.21 749.5,710.21 751.5,710.21 753.5,710.21 755.5,710.22 757.5,710.22 759.5,710.22 761.5,710.22 763.5,710.22 765.5,710.22 767.5,710.22 769.5,710.22 771.5,710.22 773.5,710.22 775.5,710.22 777.5,710.22 779.5,710.22 781.5,710.22 783.5,710.22 785.5,710.22 787.5,710.22 789.5,710.22 791.5,710.22 793.5,710.22 795.5,710.22 797.5,710.22 799.5,710.22 801.5,710.22 803.5,710.22 805.5,710.22 807.5,710.22 809.5,710.22 811.5,710.22 813.5,710.22 815.5,710.22 817.5,710.22 819.5,710.22 821.5,710.22 823.5,710.22 825.5,710.22 827.5,710.22 829.5,710.22 831.5,710.22 833.5,710.22 835.5,710.22 837.5,710.22 839.5,710.22 841.5,710.22 843.5,710.22 845.5,710.22 847.5,710.22 849.5,710.22 851.5,710.22 853.5,710.22 855.5,710.22 857.5,710.22" fill="none" stroke="#ff0000" stroke-width="3" stroke-linecap="round" stroke-linejoin="round"/>
<rect x="71" y="573" width="790" height="1" fill="#000"/>
<rect x="860" y="573" width="1" height="148" fill="#000"/>
<rect x="71" y="573" width="3" height="148" fill="#000"/>
<rect x="71" y="719" width="790" height="2" fill="#000"/>
<rect x="74.5" y="763.5" width="785" height="143" fill="none" stroke="#ffffff" stroke-width="1"/>
<line x1="140.5" y1="763" x2="140.5" y2="908" stroke="#bfbfbf" stroke-width="1"/>
<line x1="140.5" y1="910" x2="140.5" y2="914" stroke="#707070" stroke-width="1"/>
<line x1="212.5" y1="763" x2="212.5" y2="908" stroke="#bfbfbf" stroke-width="1"/>
<line x1="212.5" y1="910" x2="212.5" y2="914" stroke="#707070" stroke-width="1"/>
<line x1="285.5" y1="763" x2="285.5" y2="908" stroke="#bfbfbf" stroke-width="1"/>
<line x1="285.5" y1="910" x2="285.5" y2="914" stroke="#707070" stroke-width="1"/>
<line x1="357.5" y1="763" x2="357.5" y2="908" stroke="#bfbfbf" stroke-width="1"/>
<line x1="357.5" y1="910" x2="357.5" y2="914" stroke="#707070" stroke-width="1"/>
<line x1="430.5" y1="763" x2="430.5" y2="908" stroke="#bfbfbf" stroke-width="1"/>
<line x1="430.5" y1="910" x2="430.5" y2="914" stroke="#707070" stroke-width="1"/>
<line x1="502.5" y1="763" x2="502.5" y2="908" stroke="#bfbfbf" stroke-width="1"/>
<line x1="502.5" y1="910" x2="502.5" y2="914" stroke="#707070" stroke-width="1"/>
<line x1="575.5" y1="763" x2="575.5" y2="908" stroke="#bfbfbf" stroke-width="1"/>
<line x1="575.5" y1="910" x2="575.5" y2="914" stroke="#707070" stroke-width="1"/>
<line x1="647.5" y1="763" x2="647.5" y2="908" stroke="#bfbfbf" stroke-width="1"/>
<line x1="647.5" y1="910" x2="647.5" y2="914" stroke="#707070" stroke-width="1"/>
<line x1="720.5" y1="763" x2="720.5" y2="908" stroke="#bfbfbf" stroke-width="1"/>
<line x1="720.5" y1="910" x2="720.5" y2="914" stroke="#707070" stroke-width="1"/>
<line x1="792.5" y1="763" x2="792.5" y2="908" stroke="#bfbfbf" stroke-width="1"/>
<line x1="792.5" y1="910" x2="792.5" y2="914" stroke="#707070" stroke-width="1"/>
<line x1="74" y1="898.5" x2="860" y2="898.5" stroke="#bfbfbf" stroke-width="1"/>
<line x1="68" y1="898.5" x2="71" y2="898.5" stroke="#707070" stroke-width="1"/>
<text x="63.5" y="901.6" text-anchor="end" class="ax">2 940</text>
<line x1="74" y1="884.5" x2="860" y2="884.5" stroke="#bfbfbf" stroke-width="1"/>
<line x1="68" y1="884.5" x2="71" y2="884.5" stroke="#707070" stroke-width="1"/>
<text x="63.5" y="887.6" text-anchor="end" class="ax">2 960</text>
<line x1="74" y1="870.5" x2="860" y2="870.5" stroke="#bfbfbf" stroke-width="1"/>
<line x1="68" y1="870.5" x2="71" y2="870.5" stroke="#707070" stroke-width="1"/>
<text x="63.5" y="873.6" text-anchor="end" class="ax">2 980</text>
<line x1="74" y1="856.5" x2="860" y2="856.5" stroke="#bfbfbf" stroke-width="1"/>
<line x1="68" y1="856.5" x2="71" y2="856.5" stroke="#707070" stroke-width="1"/>
<text x="63.5" y="859.6" text-anchor="end" class="ax">3 000</text>
<line x1="74" y1="842.5" x2="860" y2="842.5" stroke="#bfbfbf" stroke-width="1"/>
<line x1="68" y1="842.5" x2="71" y2="842.5" stroke="#707070" stroke-width="1"/>
<text x="63.5" y="845.6" text-anchor="end" class="ax">3 020</text>
<line x1="74" y1="827.5" x2="860" y2="827.5" stroke="#bfbfbf" stroke-width="1"/>
<line x1="68" y1="827.5" x2="71" y2="827.5" stroke="#707070" stroke-width="1"/>
<text x="63.5" y="830.6" text-anchor="end" class="ax">3 040</text>
<line x1="74" y1="813.5" x2="860" y2="813.5" stroke="#bfbfbf" stroke-width="1"/>
<line x1="68" y1="813.5" x2="71" y2="813.5" stroke="#707070" stroke-width="1"/>
<text x="63.5" y="816.6" text-anchor="end" class="ax">3 060</text>
<line x1="74" y1="799.5" x2="860" y2="799.5" stroke="#bfbfbf" stroke-width="1"/>
<line x1="68" y1="799.5" x2="71" y2="799.5" stroke="#707070" stroke-width="1"/>
<text x="63.5" y="802.6" text-anchor="end" class="ax">3 080</text>
<line x1="74" y1="785.5" x2="860" y2="785.5" stroke="#bfbfbf" stroke-width="1"/>
<line x1="68" y1="785.5" x2="71" y2="785.5" stroke="#707070" stroke-width="1"/>
<text x="63.5" y="788.6" text-anchor="end" class="ax">3 100</text>
<line x1="74" y1="771.5" x2="860" y2="771.5" stroke="#bfbfbf" stroke-width="1"/>
<line x1="68" y1="771.5" x2="71" y2="771.5" stroke="#707070" stroke-width="1"/>
<text x="63.5" y="774.6" text-anchor="end" class="ax">3 120</text>
<line x1="69.5" y1="903.64" x2="71" y2="903.64" stroke="#909090" stroke-width="1"/>
<line x1="69.5" y1="900.82" x2="71" y2="900.82" stroke="#909090" stroke-width="1"/>
<line x1="69.5" y1="898" x2="71" y2="898" stroke="#909090" stroke-width="1"/>
<line x1="69.5" y1="895.18" x2="71" y2="895.18" stroke="#909090" stroke-width="1"/>
<line x1="69.5" y1="892.36" x2="71" y2="892.36" stroke="#909090" stroke-width="1"/>
<line x1="69.5" y1="889.53" x2="71" y2="889.53" stroke="#909090" stroke-width="1"/>
<line x1="69.5" y1="886.71" x2="71" y2="886.71" stroke="#909090" stroke-width="1"/>
<line x1="69.5" y1="883.89" x2="71" y2="883.89" stroke="#909090" stroke-width="1"/>
<line x1="69.5" y1="881.07" x2="71" y2="881.07" stroke="#909090" stroke-width="1"/>
<line x1="69.5" y1="878.24" x2="71" y2="878.24" stroke="#909090" stroke-width="1"/>
<line x1="69.5" y1="875.42" x2="71" y2="875.42" stroke="#909090" stroke-width="1"/>
<line x1="69.5" y1="872.6" x2="71" y2="872.6" stroke="#909090" stroke-width="1"/>
<line x1="69.5" y1="869.78" x2="71" y2="869.78" stroke="#909090" stroke-width="1"/>
<line x1="69.5" y1="866.96" x2="71" y2="866.96" stroke="#909090" stroke-width="1"/>
<line x1="69.5" y1="864.13" x2="71" y2="864.13" stroke="#909090" stroke-width="1"/>
<line x1="69.5" y1="861.31" x2="71" y2="861.31" stroke="#909090" stroke-width="1"/>
<line x1="69.5" y1="858.49" x2="71" y2="858.49" stroke="#909090" stroke-width="1"/>
<line x1="69.5" y1="855.67" x2="71" y2="855.67" stroke="#909090" stroke-width="1"/>
<line x1="69.5" y1="852.84" x2="71" y2="852.84" stroke="#909090" stroke-width="1"/>
<line x1="69.5" y1="850.02" x2="71" y2="850.02" stroke="#909090" stroke-width="1"/>
<line x1="69.5" y1="847.2" x2="71" y2="847.2" stroke="#909090" stroke-width="1"/>
<line x1="69.5" y1="844.38" x2="71" y2="844.38" stroke="#909090" stroke-width="1"/>
<line x1="69.5" y1="841.56" x2="71" y2="841.56" stroke="#909090" stroke-width="1"/>
<line x1="69.5" y1="838.73" x2="71" y2="838.73" stroke="#909090" stroke-width="1"/>
<line x1="69.5" y1="835.91" x2="71" y2="835.91" stroke="#909090" stroke-width="1"/>
<line x1="69.5" y1="833.09" x2="71" y2="833.09" stroke="#909090" stroke-width="1"/>
<line x1="69.5" y1="830.27" x2="71" y2="830.27" stroke="#909090" stroke-width="1"/>
<line x1="69.5" y1="827.44" x2="71" y2="827.44" stroke="#909090" stroke-width="1"/>
<line x1="69.5" y1="824.62" x2="71" y2="824.62" stroke="#909090" stroke-width="1"/>
<line x1="69.5" y1="821.8" x2="71" y2="821.8" stroke="#909090" stroke-width="1"/>
<line x1="69.5" y1="818.98" x2="71" y2="818.98" stroke="#909090" stroke-width="1"/>
<line x1="69.5" y1="816.16" x2="71" y2="816.16" stroke="#909090" stroke-width="1"/>
<line x1="69.5" y1="813.33" x2="71" y2="813.33" stroke="#909090" stroke-width="1"/>
<line x1="69.5" y1="810.51" x2="71" y2="810.51" stroke="#909090" stroke-width="1"/>
<line x1="69.5" y1="807.69" x2="71" y2="807.69" stroke="#909090" stroke-width="1"/>
<line x1="69.5" y1="804.87" x2="71" y2="804.87" stroke="#909090" stroke-width="1"/>
<line x1="69.5" y1="802.04" x2="71" y2="802.04" stroke="#909090" stroke-width="1"/>
<line x1="69.5" y1="799.22" x2="71" y2="799.22" stroke="#909090" stroke-width="1"/>
<line x1="69.5" y1="796.4" x2="71" y2="796.4" stroke="#909090" stroke-width="1"/>
<line x1="69.5" y1="793.58" x2="71" y2="793.58" stroke="#909090" stroke-width="1"/>
<line x1="69.5" y1="790.76" x2="71" y2="790.76" stroke="#909090" stroke-width="1"/>
<line x1="69.5" y1="787.93" x2="71" y2="787.93" stroke="#909090" stroke-width="1"/>
<line x1="69.5" y1="785.11" x2="71" y2="785.11" stroke="#909090" stroke-width="1"/>
<line x1="69.5" y1="782.29" x2="71" y2="782.29" stroke="#909090" stroke-width="1"/>
<line x1="69.5" y1="779.47" x2="71" y2="779.47" stroke="#909090" stroke-width="1"/>
<line x1="69.5" y1="776.64" x2="71" y2="776.64" stroke="#909090" stroke-width="1"/>
<line x1="69.5" y1="773.82" x2="71" y2="773.82" stroke="#909090" stroke-width="1"/>
<line x1="69.5" y1="771" x2="71" y2="771" stroke="#909090" stroke-width="1"/>
<line x1="69.5" y1="768.18" x2="71" y2="768.18" stroke="#909090" stroke-width="1"/>
<line x1="69.5" y1="765.36" x2="71" y2="765.36" stroke="#909090" stroke-width="1"/>
<line x1="86.5" y1="910" x2="86.5" y2="912" stroke="#909090" stroke-width="1"/>
<line x1="104.5" y1="910" x2="104.5" y2="912" stroke="#909090" stroke-width="1"/>
<line x1="122.5" y1="910" x2="122.5" y2="912" stroke="#909090" stroke-width="1"/>
<line x1="140.5" y1="910" x2="140.5" y2="912" stroke="#909090" stroke-width="1"/>
<line x1="158.5" y1="910" x2="158.5" y2="912" stroke="#909090" stroke-width="1"/>
<line x1="176.5" y1="910" x2="176.5" y2="912" stroke="#909090" stroke-width="1"/>
<line x1="194.5" y1="910" x2="194.5" y2="912" stroke="#909090" stroke-width="1"/>
<line x1="212.5" y1="910" x2="212.5" y2="912" stroke="#909090" stroke-width="1"/>
<line x1="231.5" y1="910" x2="231.5" y2="912" stroke="#909090" stroke-width="1"/>
<line x1="249.5" y1="910" x2="249.5" y2="912" stroke="#909090" stroke-width="1"/>
<line x1="267.5" y1="910" x2="267.5" y2="912" stroke="#909090" stroke-width="1"/>
<line x1="285.5" y1="910" x2="285.5" y2="912" stroke="#909090" stroke-width="1"/>
<line x1="303.5" y1="910" x2="303.5" y2="912" stroke="#909090" stroke-width="1"/>
<line x1="321.5" y1="910" x2="321.5" y2="912" stroke="#909090" stroke-width="1"/>
<line x1="339.5" y1="910" x2="339.5" y2="912" stroke="#909090" stroke-width="1"/>
<line x1="357.5" y1="910" x2="357.5" y2="912" stroke="#909090" stroke-width="1"/>
<line x1="375.5" y1="910" x2="375.5" y2="912" stroke="#909090" stroke-width="1"/>
<line x1="394.5" y1="910" x2="394.5" y2="912" stroke="#909090" stroke-width="1"/>
<line x1="412.5" y1="910" x2="412.5" y2="912" stroke="#909090" stroke-width="1"/>
<line x1="430.5" y1="910" x2="430.5" y2="912" stroke="#909090" stroke-width="1"/>
<line x1="448.5" y1="910" x2="448.5" y2="912" stroke="#909090" stroke-width="1"/>
<line x1="466.5" y1="910" x2="466.5" y2="912" stroke="#909090" stroke-width="1"/>
<line x1="484.5" y1="910" x2="484.5" y2="912" stroke="#909090" stroke-width="1"/>
<line x1="502.5" y1="910" x2="502.5" y2="912" stroke="#909090" stroke-width="1"/>
<line x1="520.5" y1="910" x2="520.5" y2="912" stroke="#909090" stroke-width="1"/>
<line x1="538.5" y1="910" x2="538.5" y2="912" stroke="#909090" stroke-width="1"/>
<line x1="557.5" y1="910" x2="557.5" y2="912" stroke="#909090" stroke-width="1"/>
<line x1="575.5" y1="910" x2="575.5" y2="912" stroke="#909090" stroke-width="1"/>
<line x1="593.5" y1="910" x2="593.5" y2="912" stroke="#909090" stroke-width="1"/>
<line x1="611.5" y1="910" x2="611.5" y2="912" stroke="#909090" stroke-width="1"/>
<line x1="629.5" y1="910" x2="629.5" y2="912" stroke="#909090" stroke-width="1"/>
<line x1="647.5" y1="910" x2="647.5" y2="912" stroke="#909090" stroke-width="1"/>
<line x1="665.5" y1="910" x2="665.5" y2="912" stroke="#909090" stroke-width="1"/>
<line x1="683.5" y1="910" x2="683.5" y2="912" stroke="#909090" stroke-width="1"/>
<line x1="701.5" y1="910" x2="701.5" y2="912" stroke="#909090" stroke-width="1"/>
<line x1="720.5" y1="910" x2="720.5" y2="912" stroke="#909090" stroke-width="1"/>
<line x1="738.5" y1="910" x2="738.5" y2="912" stroke="#909090" stroke-width="1"/>
<line x1="756.5" y1="910" x2="756.5" y2="912" stroke="#909090" stroke-width="1"/>
<line x1="774.5" y1="910" x2="774.5" y2="912" stroke="#909090" stroke-width="1"/>
<line x1="792.5" y1="910" x2="792.5" y2="912" stroke="#909090" stroke-width="1"/>
<line x1="810.5" y1="910" x2="810.5" y2="912" stroke="#909090" stroke-width="1"/>
<line x1="828.5" y1="910" x2="828.5" y2="912" stroke="#909090" stroke-width="1"/>
<line x1="846.5" y1="910" x2="846.5" y2="912" stroke="#909090" stroke-width="1"/>
<text x="140" y="926.5" text-anchor="middle" class="ax">-4 500</text>
<text x="212.44" y="926.5" text-anchor="middle" class="ax">-4 000</text>
<text x="284.89" y="926.5" text-anchor="middle" class="ax">-3 500</text>
<text x="357.33" y="926.5" text-anchor="middle" class="ax">-3 000</text>
<text x="429.78" y="926.5" text-anchor="middle" class="ax">-2 500</text>
<text x="502.22" y="926.5" text-anchor="middle" class="ax">-2 000</text>
<text x="574.66" y="926.5" text-anchor="middle" class="ax">-1 500</text>
<text x="647.11" y="926.5" text-anchor="middle" class="ax">-1 000</text>
<text x="719.56" y="926.5" text-anchor="middle" class="ax">-500</text>
<text x="792" y="926.5" text-anchor="middle" class="ax">0</text>
<line x1="76" y1="872.5" x2="859" y2="872.5" stroke="#ff7030" stroke-width="1.2" stroke-dasharray="18 6"/>
<polyline points="76,893.83 79,893.33 82,895.08 85,895.88 88,894.58 91,894.14 94,894.07 97,894.83 100,894.53 103,894.36 106,894.32 109,895.24 112,895.07 115,895.05 118,894.27 121,893.25 124,892.81 127,893.49 130,894.02 133,894.65 136,895.46 139,895.84 142,895 145,894.86 148,894.57 151,893.19 154,893.24 157,893.09 160,893.65 163,894.3 166,893.84 169,893.92 172,893.01 175,891.34 178,891.13 181,892.02 184,890.76 187,890.21 190,889.91 193,889.18 196,888.93 199,888.53 202,889.07 205,887.68 208,886.77 211,887.87 214,886.81 217,886.1 220,886.06 223,885.62 226,885.23 229,883.81 232,883.86 235,882.94 238,883.36 241,882.16 244,881.29 247,881.57 250,881.17 253,879.8 256,879.14 259,878.99 262,879.35 265,879.16 268,878.04 271,878.43 274,876.58 277,876.57 280,874.49 283,874.52 286,872.86 289,872.42 292,872.46 295,872.2 298,871.42 301,870.71 304,870.35 307,869.57 310,867.7 313,865.21 316,864.07 319,864.11 322,861.75 325,859.99 328,857.78 331,857.15 334,854.19 337,852.78 340,849.24 343,846.89 346,844.51 349,840.74 352,839.61 355,836.5 358,832.39 361,829.87 364,826.93 367,822.37 370,819.83 373,816.96 376,815.97 379,813.48 382,811.38 385,807.93 388,806.26 391,802.22 394,801.1 397,797.81 400,796.7 403,794.63 406,791.4 409,790.37 412,788.93 415,786.22 418,784.73 421,783.95 424,780.61 427,780.02 430,779.15 433,777.41 436,775.68 439,774.41 442,775.17 445,775.06 448,775.68 451,774.99 454,773.74 457,772.82 460,771.45 463,770.84 466,770.27 469,770.41 472,771.13 475,772.22 478,771.96 481,772.77 484,773.77 487,773.54 490,772.43 493,773.59 496,773.22 499,773.57 502,773.63 505,774.71 508,773.69 511,775.1 514,775.46 517,776.58 520,778.47 523,778.43 526,779.55 529,780.5 532,781.28 535,781.7 538,782.5 541,782.27 544,783.22 547,783.59 550,784.59 553,785.5 556,788.18 559,789.55 562,791.22 565,791.91 568,792.9 571,793.88 574,795.62 577,798.72 580,800.99 583,802.99 586,806.27 589,808.95 592,810.55 595,813.14 598,814.15 601,816.86 604,819.63 607,822.04 610,824.49 613,827.16 616,829.23 619,831.8 622,834.8 625,836.84 628,840.02 631,841.09 634,842.42 637,844.73 640,847.8 643,850.43 646,852.85 649,856.49 652,858.65 655,860.57 658,863.27 661,865.62 664,865.92 667,867.93 670,869.48 673,870.24 676,872.19 679,874.72 682,875.21 685,877.56 688,880.18 691,880.55 694,882.57 697,883.63 700,883.45 703,884.19 706,886.49 709,887.08 712,887.86 715,888.46 718,889.76 721,889.89 724,891.46 727,892.1 730,892.54 733,891.8 736,893.67 739,893.36 742,894.74 745,894.83 748,895.52 751,895.94 754,895.7 757,896.6 760,897.85 763,898.66 766,899.33 769,898.09 772,898.09 775,897.51 778,897.96 781,899.82 784,899.43 787,899.08 790,899.12 793,899.75 796,900.47 799,900.69 802,900.11 805,901.08 808,901.06 811,901.22 814,900.28 817,900.2 820,899.93 823,900.05 826,901.37 829,902.22 832,902.1 835,902.6 838,902.49 841,901.9 844,901.09 847,901.46 850,901.15 853,902.64 856,902.82" fill="none" stroke="#8c00f0" stroke-width="1.2" stroke-linejoin="round"/>
<polyline points="75.5,898.39 77.5,898.39 79.5,898.38 81.5,898.37 83.5,898.36 85.5,898.35 87.5,898.34 89.5,898.33 91.5,898.32 93.5,898.3 95.5,898.29 97.5,898.28 99.5,898.26 101.5,898.25 103.5,898.23 105.5,898.21 107.5,898.19 109.5,898.17 111.5,898.15 113.5,898.13 115.5,898.1 117.5,898.08 119.5,898.05 121.5,898.02 123.5,897.99 125.5,897.96 127.5,897.92 129.5,897.89 131.5,897.85 133.5,897.81 135.5,897.77 137.5,897.72 139.5,897.68 141.5,897.63 143.5,897.58 145.5,897.52 147.5,897.46 149.5,897.4 151.5,897.34 153.5,897.27 155.5,897.2 157.5,897.13 159.5,897.05 161.5,896.97 163.5,896.88 165.5,896.79 167.5,896.7 169.5,896.6 171.5,896.49 173.5,896.38 175.5,896.27 177.5,896.15 179.5,896.02 181.5,895.89 183.5,895.75 185.5,895.61 187.5,895.46 189.5,895.3 191.5,895.14 193.5,894.97 195.5,894.79 197.5,894.61 199.5,894.41 201.5,894.21 203.5,894 205.5,893.78 207.5,893.55 209.5,893.31 211.5,893.07 213.5,892.81 215.5,892.54 217.5,892.26 219.5,891.98 221.5,891.68 223.5,891.36 225.5,891.04 227.5,890.71 229.5,890.36 231.5,890 233.5,889.63 235.5,889.24 237.5,888.85 239.5,888.43 241.5,888.01 243.5,887.57 245.5,887.11 247.5,886.64 249.5,886.15 251.5,885.65 253.5,885.13 255.5,884.6 257.5,884.05 259.5,883.48 261.5,882.9 263.5,882.3 265.5,881.68 267.5,881.04 269.5,880.39 271.5,879.71 273.5,879.02 275.5,878.31 277.5,877.59 279.5,876.84 281.5,876.07 283.5,875.29 285.5,874.48 287.5,873.66 289.5,872.81 291.5,871.95 293.5,871.06 295.5,870.16 297.5,869.23 299.5,868.29 301.5,867.33 303.5,866.34 305.5,865.34 307.5,864.32 309.5,863.27 311.5,862.21 313.5,861.13 315.5,860.03 317.5,858.91 319.5,857.77 321.5,856.61 323.5,855.43 325.5,854.24 327.5,853.02 329.5,851.79 331.5,850.55 333.5,849.28 335.5,848 337.5,846.71 339.5,845.4 341.5,844.07 343.5,842.73 345.5,841.37 347.5,840.01 349.5,838.63 351.5,837.23 353.5,835.83 355.5,834.42 357.5,832.99 359.5,831.56 361.5,830.12 363.5,828.67 365.5,827.22 367.5,825.75 369.5,824.29 371.5,822.82 373.5,821.35 375.5,819.87 377.5,818.39 379.5,816.92 381.5,815.44 383.5,813.97 385.5,812.5 387.5,811.03 389.5,809.57 391.5,808.11 393.5,806.66 395.5,805.22 397.5,803.79 399.5,802.37 401.5,800.96 403.5,799.56 405.5,798.17 407.5,796.81 409.5,795.45 411.5,794.12 413.5,792.8 415.5,791.5 417.5,790.23 419.5,788.97 421.5,787.74 423.5,786.53 425.5,785.35 427.5,784.19 429.5,783.06 431.5,781.95 433.5,780.88 435.5,779.84 437.5,778.83 439.5,777.84 441.5,776.9 443.5,775.98 445.5,775.1 447.5,774.26 449.5,773.45 451.5,772.69 453.5,771.95 455.5,771.26 457.5,770.61 459.5,769.99 461.5,769.42 463.5,768.89 465.5,768.4 467.5,767.95 469.5,767.54 471.5,767.18 473.5,766.86 475.5,766.58 477.5,766.35 479.5,766.16 481.5,766.02 483.5,765.92 485.5,765.87 487.5,765.86 489.5,765.89 491.5,765.97 493.5,766.1 495.5,766.27 497.5,766.48 499.5,766.74 501.5,767.04 503.5,767.38 505.5,767.77 507.5,768.2 509.5,768.67 511.5,769.19 513.5,769.74 515.5,770.34 517.5,770.98 519.5,771.65 521.5,772.37 523.5,773.12 525.5,773.91 527.5,774.74 529.5,775.6 531.5,776.5 533.5,777.44 535.5,778.4 537.5,779.4 539.5,780.43 541.5,781.49 543.5,782.58 545.5,783.7 547.5,784.85 549.5,786.02 551.5,787.22 553.5,788.44 555.5,789.69 557.5,790.96 559.5,792.24 561.5,793.55 563.5,794.88 565.5,796.23 567.5,797.59 569.5,798.97 571.5,800.36 573.5,801.76 575.5,803.18 577.5,804.61 579.5,806.04 581.5,807.49 583.5,808.94 585.5,810.4 587.5,811.87 589.5,813.34 591.5,814.81 593.5,816.29 595.5,817.76 597.5,819.24 599.5,820.72 601.5,822.19 603.5,823.66 605.5,825.13 607.5,826.59 609.5,828.05 611.5,829.5 613.5,830.95 615.5,832.38 617.5,833.81 619.5,835.23 621.5,836.64 623.5,838.03 625.5,839.42 627.5,840.79 629.5,842.15 631.5,843.5 633.5,844.83 635.5,846.15 637.5,847.45 639.5,848.74 641.5,850.01 643.5,851.26 645.5,852.5 647.5,853.72 649.5,854.92 651.5,856.11 653.5,857.27 655.5,858.42 657.5,859.55 659.5,860.66 661.5,861.75 663.5,862.82 665.5,863.87 667.5,864.9 669.5,865.92 671.5,866.91 673.5,867.88 675.5,868.83 677.5,869.77 679.5,870.68 681.5,871.57 683.5,872.44 685.5,873.3 687.5,874.13 689.5,874.94 691.5,875.74 693.5,876.51 695.5,877.27 697.5,878.01 699.5,878.72 701.5,879.42 703.5,880.1 705.5,880.76 707.5,881.41 709.5,882.03 711.5,882.64 713.5,883.23 715.5,883.81 717.5,884.37 719.5,884.91 721.5,885.43 723.5,885.94 725.5,886.43 727.5,886.91 729.5,887.37 731.5,887.82 733.5,888.25 735.5,888.67 737.5,889.08 739.5,889.47 741.5,889.84 743.5,890.21 745.5,890.56 747.5,890.9 749.5,891.23 751.5,891.54 753.5,891.85 755.5,892.14 757.5,892.42 759.5,892.7 761.5,892.96 763.5,893.21 765.5,893.45 767.5,893.68 769.5,893.91 771.5,894.12 773.5,894.33 775.5,894.52 777.5,894.71 779.5,894.89 781.5,895.07 783.5,895.24 785.5,895.39 787.5,895.55 789.5,895.69 791.5,895.83 793.5,895.97 795.5,896.1 797.5,896.22 799.5,896.33 801.5,896.45 803.5,896.55 805.5,896.65 807.5,896.75 809.5,896.84 811.5,896.93 813.5,897.01 815.5,897.09 817.5,897.17 819.5,897.24 821.5,897.31 823.5,897.38 825.5,897.44 827.5,897.5 829.5,897.55 831.5,897.61 833.5,897.66 835.5,897.71 837.5,897.75 839.5,897.79 841.5,897.83 843.5,897.87 845.5,897.91 847.5,897.94 849.5,897.98 851.5,898.01 853.5,898.04 855.5,898.07 857.5,898.09" fill="none" stroke="#1e90ff" stroke-width="3" stroke-linecap="round" stroke-linejoin="round"/>
<rect x="71" y="762" width="790" height="1" fill="#000"/>
<rect x="860" y="762" width="1" height="148" fill="#000"/>
<rect x="71" y="762" width="3" height="148" fill="#000"/>
<rect x="71" y="908" width="790" height="2" fill="#000"/>
</svg>
<div class="wborder"></div>
</body></html>
